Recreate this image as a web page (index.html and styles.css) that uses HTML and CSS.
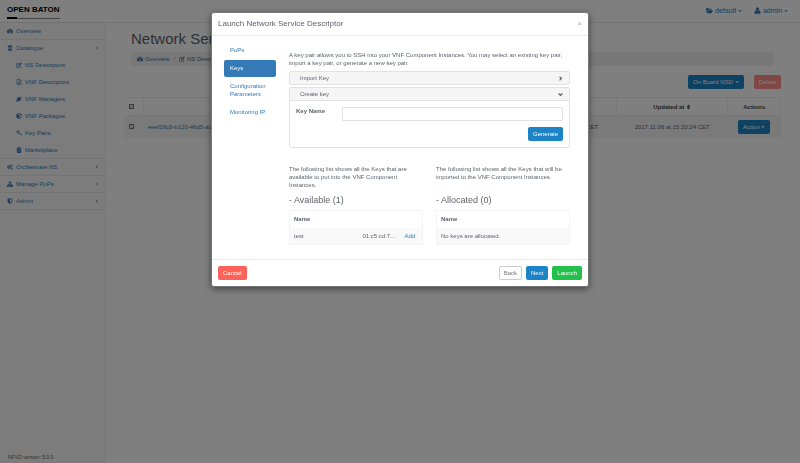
FILE: index.html
```html
<!DOCTYPE html>
<html lang="en">
<head>
    <meta charset="utf-8">
    <title>Open Baton</title>
    <link rel="stylesheet" href="styles.css">
</head>
<body>
    <svg class="sprite" aria-hidden="true">
        <symbol id="dashboard" viewBox="0 0 16 16"><path fill-rule="evenodd" d="M8 2a8 8 0 0 1 6.800 12.200H1.200A8 8 0 0 1 8 2zM7 4h2v2H7zM3 6h2v2H3zM11 6h2v2h-2zM9.500 6.500l-1.200 3.200a1.800 1.800 0 1 0 1 .3l1.200-3.200z"/></symbol>
        <symbol id="database" viewBox="0 0 16 16"><path d="M2 2.500C2 0 14 0 14 2.500v1C14 6 2 6 2 3.500zM2 5.500c2 2 10 2 12 0v2c0 2.500-12 2.500-12 0zM2 9.300c2 2 10 2 12 0v2c0 2.500-12 2.500-12 0zM2 13c2 1.700 10 1.700 12 0v.8c0 2.600-12 2.600-12 0z"/></symbol>
        <symbol id="edit" viewBox="0 0 16 16"><path d="M12.500 9.500V13a1.500 1.500 0 0 1-1.500 1.500H3A1.500 1.500 0 0 1 1.500 13V5A1.500 1.500 0 0 1 3 3.500h6" fill="none" stroke="currentColor" stroke-width="1.700"/><path d="M13 1l2.500 2.500L8.500 10.500 5.500 11l.5-3z"/></symbol>
        <symbol id="file" viewBox="0 0 16 16"><path d="M2.500 1h7.500l3.500 3.500V15h-11zM9.500 1v4h4M5 8h6M5 10.200h6M5 12.400h6" fill="none" stroke="currentColor" stroke-width="1.500"/></symbol>
        <symbol id="plug" viewBox="0 0 16 16"><path d="M9.500 4.500L13 1l1.200 1.200-3.400 3.500 1.300 1.300L15 4l1 1.300-3 3 1 1-1 1c-2 3-5 4-8 2.700L2 16l-2-2 3-3C1.500 8 3 5 6 3l1.500-1z"/></symbol>
        <symbol id="cube" viewBox="0 0 16 16"><path fill-rule="evenodd" d="M8 0l7 3v9l-7 4-7-4V3zM8 1.800L3.500 3.700 8 5.600l4.500-1.900zM9 7.500v6l4.500-2.500V5.500z"/></symbol>
        <symbol id="key" viewBox="0 0 16 16"><circle cx="5" cy="5" r="3" fill="none" stroke="currentColor" stroke-width="2.200"/><path d="M7 7l7 7M11 11l2.500-2M13 13.500l2.500-2" fill="none" stroke="currentColor" stroke-width="2"/></symbol>
        <symbol id="basket" viewBox="0 0 16 16"><path fill-rule="evenodd" d="M4 4c0-5 8-5 8 0h2.500v3h-13V4zm2 0h4c0-2.500-4-2.500-4 0zM2 8h12l-1 8H3zM5 9.500v4h1.200v-4zM9.800 9.500v4H11v-4z"/></symbol>
        <symbol id="cogs" viewBox="0 0 16 16"><circle cx="5.500" cy="8" r="3.300" fill="none" stroke="currentColor" stroke-width="2.600"/><circle cx="5.500" cy="8" r="4.800" fill="none" stroke="currentColor" stroke-width="1.400" stroke-dasharray="2 1.770"/><circle cx="13" cy="4" r="1.800" fill="none" stroke="currentColor" stroke-width="1.700"/><circle cx="13" cy="12" r="1.800" fill="none" stroke="currentColor" stroke-width="1.700"/></symbol>
        <symbol id="sitemap" viewBox="0 0 16 16"><path d="M5.500 1h5v4.500H8.800V7.500H14V10.500h2V15h-5v-4.500h1.500V9H8.800v1.500h1.700V15h-5v-4.500h1.700V9H3.500v1.500H5V15H0v-4.500h2v-3h5.200v-2H5.500z"/></symbol>
        <symbol id="shield" viewBox="0 0 16 16"><path fill-rule="evenodd" d="M1.500 1h13v7c0 4-3 6-6.500 8-3.500-2-6.500-4-6.500-8zM8 3v10.500c3-1.800 4.500-3 4.500-5.500V3z"/></symbol>
        <symbol id="folder" viewBox="0 0 16 16"><path d="M0 3.500L1.500 2H5l1.500 1.800H12L13 5v1.500H4L0 12zM4.500 7.500H16L12.800 14H1z"/></symbol>
        <symbol id="user" viewBox="0 0 16 16"><circle cx="8" cy="4.500" r="3.800"/><path d="M4.500 7.500c2 2 5 2 7 0 2.500.8 3.500 3 3.500 5.500 0 1.500-.8 2.500-2 2.500H3c-1.200 0-2-1-2-2.500 0-2.500 1-4.700 3.500-5.500z"/></symbol>
        <symbol id="sort" viewBox="0 0 16 16"><path d="M8 0l5.500 7h-11zM8 16l5.500-7h-11z"/></symbol>
        <symbol id="caret" viewBox="0 0 16 16"><path d="M1 5h14l-7 7z"/></symbol>
        <symbol id="angle-left" viewBox="0 0 16 16"><path d="M10 4L6 8l4 4" fill="none" stroke="currentColor" stroke-width="2"/></symbol>
        <symbol id="chevron-right" viewBox="0 0 16 16"><path d="M5 2l6 6-6 6" fill="none" stroke="currentColor" stroke-width="4"/></symbol>
        <symbol id="chevron-down" viewBox="0 0 16 16"><path d="M2 5l6 6 6-6" fill="none" stroke="currentColor" stroke-width="4"/></symbol>
    </svg>

    <header class="topbar">
        <a href="#" class="logo">OPEN BATON</a>
        <nav class="top-links">
            <a href="#"><svg class="icon"><use href="#folder"/></svg> default <svg class="caret"><use href="#caret"/></svg></a>
            <a href="#"><svg class="icon"><use href="#user"/></svg> admin <svg class="caret"><use href="#caret"/></svg></a>
        </nav>
    </header>

    <div class="wrapper">
        <aside class="sidebar">
            <ul class="side-menu">
                <li><a href="#"><svg class="icon"><use href="#dashboard"/></svg>Overview</a></li>
                <li>
                    <a href="#"><svg class="icon"><use href="#database"/></svg>Catalogue<svg class="arrow"><use href="#angle-left"/></svg></a>
                    <ul class="sub-menu">
                        <li><a href="#"><svg class="icon"><use href="#edit"/></svg>NS Descriptors</a></li>
                        <li><a href="#"><svg class="icon"><use href="#file"/></svg>VNF Descriptors</a></li>
                        <li><a href="#"><svg class="icon"><use href="#plug"/></svg>VNF Managers</a></li>
                        <li><a href="#"><svg class="icon"><use href="#cube"/></svg>VNF Packages</a></li>
                        <li><a href="#"><svg class="icon"><use href="#key"/></svg>Key Pairs</a></li>
                        <li><a href="#"><svg class="icon"><use href="#basket"/></svg>Marketplace</a></li>
                    </ul>
                </li>
                <li><a href="#"><svg class="icon"><use href="#cogs"/></svg>Orchestrate NS<svg class="arrow"><use href="#angle-left"/></svg></a></li>
                <li><a href="#"><svg class="icon"><use href="#sitemap"/></svg>Manage PoPs<svg class="arrow"><use href="#angle-left"/></svg></a></li>
                <li><a href="#"><svg class="icon"><use href="#shield"/></svg>Admin<svg class="arrow"><use href="#angle-left"/></svg></a></li>
            </ul>
            <p class="version">NFVO version: 5.0.0</p>
        </aside>

        <main class="page">
            <h1>Network Service Descriptors</h1>
            <ol class="breadcrumb">
                <li><a href="#"><svg class="icon"><use href="#dashboard"/></svg> Overview</a></li>
                <li><svg class="icon"><use href="#edit"/></svg> NS Descriptors</li>
            </ol>
            <div class="toolbar">
                <button type="button" class="btn btn-primary">On Board NSD <svg class="caret"><use href="#caret"/></svg></button>
                <button type="button" class="btn btn-danger" disabled>Delete</button>
            </div>
            <table class="nsd-table">
                <thead>
                    <tr>
                        <th class="col-check"><input type="checkbox" aria-label="Select all"></th>
                        <th class="col-id">Id</th>
                        <th>Name</th>
                        <th class="col-date">Created at</th>
                        <th class="col-date">Updated at <svg class="sort"><use href="#sort"/></svg></th>
                        <th class="col-actions">Actions</th>
                    </tr>
                </thead>
                <tbody>
                    <tr>
                        <td><input type="checkbox" aria-label="Select descriptor"></td>
                        <td class="id"><a href="#">eeef29c9-b120-46d5-ad</a></td>
                        <td></td>
                        <td>2017.11.06 at 15:20:24 CET</td>
                        <td>2017.11.06 at 15:20:24 CET</td>
                        <td><button type="button" class="btn btn-primary">Action <svg class="caret"><use href="#caret"/></svg></button></td>
                    </tr>
                </tbody>
            </table>
        </main>
    </div>

    <div class="backdrop">
        <div class="modal" role="dialog" aria-labelledby="modalTitle">
            <div class="modal-header">
                <h2 id="modalTitle">Launch Network Service Descriptor</h2>
                <button type="button" class="close" aria-label="Close">&times;</button>
            </div>
            <div class="modal-body">
                <nav class="pills">
                    <a href="#">PoPs</a>
                    <a href="#" class="active">Keys</a>
                    <a href="#">Configuration Parameters</a>
                    <a href="#">Monitoring IP</a>
                </nav>
                <div class="tab-content">
                    <p>A key pair allows you to SSH into your VNF Component Instances. You may select an existing key pair, import a key pair, or generate a new key pair.</p>
                    <div class="panel">
                        <button type="button" class="panel-heading">Import Key <svg class="icon"><use href="#chevron-right"/></svg></button>
                    </div>
                    <div class="panel">
                        <button type="button" class="panel-heading">Create key <svg class="icon"><use href="#chevron-down"/></svg></button>
                        <form class="panel-body">
                            <div class="form-group">
                                <label for="keyName">Key Name</label>
                                <input type="text" id="keyName" name="keyName">
                            </div>
                            <button type="button" class="btn btn-primary">Generate</button>
                        </form>
                    </div>
                    <div class="key-lists">
                        <section>
                            <p>The following list shows all the Keys that are available to put into the VNF Component Instances.</p>
                            <h3><a href="#">-</a> Available (1)</h3>
                            <table class="key-table">
                                <thead>
                                    <tr><th colspan="3">Name</th></tr>
                                </thead>
                                <tbody>
                                    <tr>
                                        <td>test</td>
                                        <td class="fingerprint">01:c5:cd:7...</td>
                                        <td class="add"><a href="#">Add</a></td>
                                    </tr>
                                </tbody>
                            </table>
                        </section>
                        <section>
                            <p>The following list shows all the Keys that will be imported to the VNF Component Instances.</p>
                            <h3><a href="#">-</a> Allocated (0)</h3>
                            <table class="key-table">
                                <thead>
                                    <tr><th>Name</th></tr>
                                </thead>
                                <tbody>
                                    <tr><td>No keys are allocated.</td></tr>
                                </tbody>
                            </table>
                        </section>
                    </div>
                </div>
            </div>
            <div class="modal-footer">
                <button type="button" class="btn btn-danger cancel">Cancel</button>
                <button type="button" class="btn btn-default">Back</button>
                <button type="button" class="btn btn-primary">Next</button>
                <button type="button" class="btn btn-success">Launch</button>
            </div>
        </div>
    </div>
</body>
</html>
```
FILE: styles.css
```css
* {
    box-sizing: border-box;
}
body {
    display: flex;
    flex-direction: column;
    min-height: 100vh;
    margin: 0;
    font-family: "Liberation Sans", Arial, sans-serif;
    font-size: 6px;
    line-height: 8px;
    color: #5c636d;
    background-color: #fff;
}
h1, h2, h3, p, ul, ol {
    margin: 0;
    padding: 0;
    font-weight: normal;
}
ul, ol {
    list-style: none;
}
a {
    color: #337ab7;
    text-decoration: none;
}
button, input {
    font: inherit;
    color: inherit;
}
.sprite {
    display: none;
}
.icon, .caret, .arrow, .sort {
    width: 6px;
    height: 6px;
    fill: currentColor;
    vertical-align: -1px;
}
.caret {
    width: 4px;
    height: 4px;
    vertical-align: 0;
}
.sort {
    width: 5px;
}

/* top bar */
.topbar {
    display: flex;
    justify-content: space-between;
    height: 23px;
    padding: 4px 12px 0 7px;
    border-bottom: 1px solid #e7e7e7;
}
.logo {
    height: 16px;
    font-size: 8px;
    font-weight: bold;
    line-height: 11px;
    color: #000;
    background: linear-gradient(#000, #000) 0 13px / 10px 2px no-repeat,
        linear-gradient(#888, #888) 0 14px / 100% 1px no-repeat;
}
.top-links {
    display: flex;
    gap: 12px;
    font-size: 7px;
    line-height: 14px;
}
.top-links .icon {
    width: 7px;
    height: 7px;
}

/* sidebar */
.wrapper {
    display: flex;
    flex: 1;
}
.sidebar {
    display: flex;
    flex-direction: column;
    justify-content: space-between;
    width: 106px;
    background-color: #f8f8f8;
    border-right: 1px solid #f0f0f0;
}
.side-menu > li {
    border-bottom: 1px solid #e7e7e7;
}
.side-menu a {
    display: flex;
    align-items: center;
    gap: 3px;
    height: 16px;
    padding: 0 5px 0 7px;
}
.side-menu .sub-menu a {
    height: 17px;
    padding-left: 16px;
}
.arrow {
    margin-left: auto;
    color: #5c636d;
}
.version {
    padding: 0 8px 2px;
    font-size: 5px;
}

/* page */
.page {
    flex: 1;
    min-width: 0;
    padding: 7px 19px 0 18px;
}
.page h1 {
    padding-left: 7px;
    font-size: 15px;
    line-height: 18px;
}
.breadcrumb {
    display: flex;
    margin: 4px 7px 9px;
    padding: 3px 6px;
    background-color: #f0f0f0;
    border-radius: 2px;
}
.breadcrumb li + li::before {
    content: "/";
    padding: 0 4px;
    color: #bbb;
}
.toolbar {
    display: flex;
    justify-content: flex-end;
    gap: 10px;
    margin-bottom: 8px;
}
.btn {
    height: 14px;
    padding: 0 4px;
    border: 1px solid transparent;
    border-radius: 2px;
    line-height: 12px;
    color: #fff;
    cursor: pointer;
}
.btn-primary {
    background-color: #1c84c6;
}
.btn-danger {
    background-color: #ff6259;
}
.btn-danger:disabled {
    opacity: 0.7;
}
.btn-success {
    background-color: #23c14b;
}
.btn-default {
    color: #777;
    background-color: #fff;
    border-color: #ccc;
}
table {
    width: 100%;
    border-collapse: collapse;
}
.nsd-table {
    table-layout: fixed;
    text-align: center;
}
.nsd-table th {
    height: 18px;
    padding: 0;
    border: 1px solid #eee;
    color: #444;
}
.nsd-table td {
    height: 22px;
    padding: 0;
    background-color: #f5f5f5;
}
.nsd-table .id {
    padding-left: 4px;
    text-align: left;
}
.nsd-table input {
    appearance: none;
    display: block;
    width: 5px;
    height: 5px;
    margin: 0 0 0 5px;
    border: 1px solid #777;
    background-color: #ddd;
}
.nsd-table input:checked {
    background-color: #337ab7;
}
.nsd-table .col-check {
    width: 3%;
    border-left: 0;
}
.nsd-table .col-id {
    width: 25%;
}
.nsd-table .col-date {
    width: 17%;
}
.nsd-table .col-actions {
    width: 8%;
}

/* modal */
.backdrop {
    position: fixed;
    inset: 0;
    padding-top: 12px;
    background-color: rgba(0, 0, 0, 0.5);
}
.modal {
    max-width: 378px;
    margin: 0 auto;
    background-color: #fff;
    border: 1px solid #777;
    border-radius: 3px;
    box-shadow: 0 2px 7px rgba(0, 0, 0, 0.5);
}
.modal-header {
    display: flex;
    justify-content: space-between;
    align-items: center;
    height: 23px;
    padding: 0 6px;
    border-bottom: 1px solid #e9e9e9;
}
.modal-header h2 {
    font-size: 8px;
    line-height: 10px;
}
.close {
    padding: 0;
    border: 0;
    font-size: 8px;
    color: #aaa;
    background: none;
    cursor: pointer;
}
.modal-body {
    display: flex;
    gap: 13px;
    padding: 6px 18px 14px 12px;
}
.pills {
    display: flex;
    flex-direction: column;
    gap: 1px;
    width: 52px;
}
.pills a {
    padding: 4px 6px 5px;
    border-radius: 2px;
}
.pills a.active {
    color: #fff;
    background-color: #337ab7;
}
.tab-content {
    flex: 1;
    padding-top: 9px;
}
.tab-content > p {
    margin-bottom: 4px;
}
.panel {
    margin-bottom: 2px;
    border: 1px solid #e2e2e2;
    border-radius: 2px;
}
.panel-heading {
    display: flex;
    justify-content: space-between;
    align-items: center;
    width: 100%;
    height: 12px;
    padding: 0 6px 0 10px;
    border: 0;
    background-color: #f5f5f5;
    cursor: pointer;
}
.panel-heading .icon {
    width: 5px;
    height: 5px;
}
.panel-body {
    padding: 6px;
    border-top: 1px solid #e2e2e2;
}
.form-group {
    display: flex;
    margin-bottom: 6px;
}
.form-group label {
    width: 46px;
    font-weight: bold;
}
.form-group input {
    flex: 1;
    height: 14px;
    padding: 0 4px;
    border: 1px solid #e2e2e2;
    border-radius: 1px;
}
.panel-body .btn {
    display: block;
    margin-left: auto;
}
.key-lists {
    display: grid;
    grid-template-columns: 1fr 1fr;
    gap: 13px;
    margin-top: 17px;
}
.key-lists p {
    min-height: 24px;
}
.key-lists h3 {
    margin: 6px 0 5px;
    font-size: 9px;
    line-height: 10px;
}
.key-table {
    border: 1px solid #f4f4f4;
    text-align: left;
}
.key-table th, .key-table td {
    height: 17px;
    padding: 0 4px;
}
.key-table td {
    background-color: #f9f9f9;
}
.key-table .fingerprint {
    width: 42px;
}
.key-table .add {
    width: 22px;
}
.modal-footer {
    display: flex;
    gap: 4px;
    padding: 6px;
    border-top: 1px solid #e9e9e9;
}
.cancel {
    margin-right: auto;
}
```
